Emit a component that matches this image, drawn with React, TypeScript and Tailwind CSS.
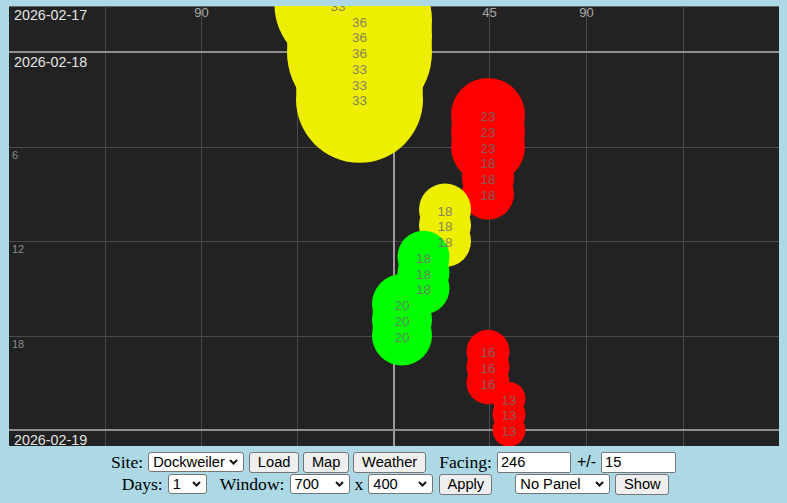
import * as React from 'react';

type Reading = { h: number; x: number; s: number; c: string };

const YELLOW = '#eeee00';
const RED = '#ff0000';
const GREEN = '#00ff00';

// radius grows with the wind speed
const RADIUS: Record<number, number> = { 36: 72.5, 33: 63.5, 23: 37, 20: 30, 18: 26, 16: 21.5, 13: 16.5 };

const run = (from: number, x: number, s: number, c: string): Reading[] =>
  [0, 1, 2].map((i) => ({ h: from + i, x, s, c }));

const readings: Reading[] = [
  { h: -3, x: 329, s: 33, c: YELLOW },
  ...run(-2, 350.5, 36, YELLOW),
  ...run(1, 350.5, 33, YELLOW),
  ...run(4, 479, 23, RED),
  ...run(7, 479, 18, RED),
  ...run(10, 436, 18, YELLOW),
  ...run(13, 414.5, 18, GREEN),
  ...run(16, 393, 20, GREEN),
  ...run(19, 479, 16, RED),
  ...run(22, 500, 13, RED),
];

const hourY = (h: number) => 46 + 15.75 * h;

function Chart() {
  const thinX = [96.5, 192.5, 288.5, 480.5, 577.5, 674.5];
  const thinY = [141.5, 235.5, 330.5];
  return (
    <svg width={770} height={440} className="block bg-[#222222]">
      <line x1={0} y1={0.5} x2={770} y2={0.5} stroke="#666" />
      {thinX.map((x) => (
        <line key={x} x1={x} y1={0} x2={x} y2={440} stroke="#4a4a4a" />
      ))}
      {thinY.map((y) => (
        <line key={y} x1={0} y1={y} x2={770} y2={y} stroke="#4a4a4a" />
      ))}
      <line x1={385} y1={0} x2={385} y2={440} stroke="#9a9a9a" strokeWidth={2} />
      <line x1={0} y1={46} x2={770} y2={46} stroke="#8f8f8f" strokeWidth={2} />
      <line x1={0} y1={424} x2={770} y2={424} stroke="#8f8f8f" strokeWidth={2} />

      <g fontFamily="'Liberation Sans', Arial, sans-serif" fill="#e4e4e4" fontSize={14.3}>
        <text x={5} y={14}>2026-02-17</text>
        <text x={5} y={61}>2026-02-18</text>
        <text x={5} y={439}>2026-02-19</text>
      </g>
      <g fontFamily="'Liberation Sans', Arial, sans-serif" fill="#8a8a8a" fontSize={11}>
        <text x={3} y={152.5}>6</text>
        <text x={3} y={246.5}>12</text>
        <text x={3} y={341.5}>18</text>
      </g>
      <g fontFamily="'Liberation Sans', Arial, sans-serif" fill="#a8a8a8" fontSize={13} textAnchor="middle">
        <text x={192.5} y={11}>90</text>
        <text x={480.5} y={11}>45</text>
        <text x={577.5} y={11}>90</text>
      </g>

      {readings.map((r, i) => (
        <circle key={i} cx={r.x} cy={hourY(r.h)} r={RADIUS[r.s]} fill={r.c} />
      ))}
      <g fontFamily="'Liberation Sans', Arial, sans-serif" fontSize={13.5} textAnchor="middle" fill="#6e6e6e" fillOpacity={0.85}>
        {readings.map((r, i) => (
          <text key={i} x={r.x} y={hourY(r.h) + 6}>
            {r.s}
          </text>
        ))}
      </g>
    </svg>
  );
}

function Chevron() {
  return (
    <svg width={9} height={6} viewBox="0 0 9 6" className="pointer-events-none absolute right-[6px] top-[7px]">
      <path d="M1 1 L4.5 4.5 L8 1" fill="none" stroke="#111" strokeWidth={2} />
    </svg>
  );
}

function Select({ className, value }: { className: string; value: string }) {
  return (
    <span className="relative inline-flex">
      <select
        defaultValue={value}
        className={`h-[20px] appearance-none rounded-[3px] border border-[#767676] bg-white pl-[4px] leading-none text-black ${className}`}
      >
        <option>{value}</option>
      </select>
      <Chevron />
    </span>
  );
}

function Btn({ className, children }: { className: string; children: React.ReactNode }) {
  return (
    <button className={`h-[21px] rounded-[3px] border border-[#767676] bg-[#efefef] leading-none text-black ${className}`}>
      {children}
    </button>
  );
}

function Field({ className, value }: { className: string; value: string }) {
  return (
    <input
      defaultValue={value}
      className={`h-[21px] rounded-[2px] border border-[#767676] bg-white pl-[3px] leading-none text-black ${className}`}
    />
  );
}

export default function App() {
  return (
    <div className="min-h-screen bg-[#add8e6] pt-[6px] font-['Liberation_Serif',serif] text-[17.6px] text-black">
      <div className="mx-auto w-[770px]">
        <Chart />
      </div>

      <div className="mt-[5px] font-['Liberation_Sans',Arial,sans-serif] text-[14.67px]">
        <div className="flex h-[22px] items-center justify-center">
          <span className="font-['Liberation_Serif',serif] text-[17.6px]">Site:</span>
          <span className="ml-[5px]"><Select className="w-[96px]" value="Dockweiler" /></span>
          <Btn className="ml-[5px] w-[50px]">Load</Btn>
          <Btn className="ml-[4px] w-[46px]">Map</Btn>
          <Btn className="ml-[4px] w-[73px]">Weather</Btn>
          <span className="ml-[13px] font-['Liberation_Serif',serif] text-[17.6px]">Facing:</span>
          <Field className="ml-[5px] w-[74px]" value="246" />
          <span className="ml-[6px] text-[16px]">+/-</span>
          <Field className="ml-[5px] w-[75px]" value="15" />
        </div>
        <div className="flex h-[22px] items-center justify-center pl-[4px]">
          <span className="font-['Liberation_Serif',serif] text-[17.6px]">Days:</span>
          <span className="ml-[5px]"><Select className="w-[39px]" value="1" /></span>
          <span className="ml-[13px] font-['Liberation_Serif',serif] text-[17.6px]">Window:</span>
          <span className="ml-[5px]"><Select className="w-[60px]" value="700" /></span>
          <span className="ml-[5px] font-['Liberation_Serif',serif] text-[17.6px]">x</span>
          <span className="ml-[5px]"><Select className="w-[65px]" value="400" /></span>
          <Btn className="ml-[6px] w-[53px]">Apply</Btn>
          <span className="ml-[23px]"><Select className="w-[95px]" value="No Panel" /></span>
          <Btn className="ml-[5px] w-[54px]">Show</Btn>
        </div>
      </div>
    </div>
  );
}
